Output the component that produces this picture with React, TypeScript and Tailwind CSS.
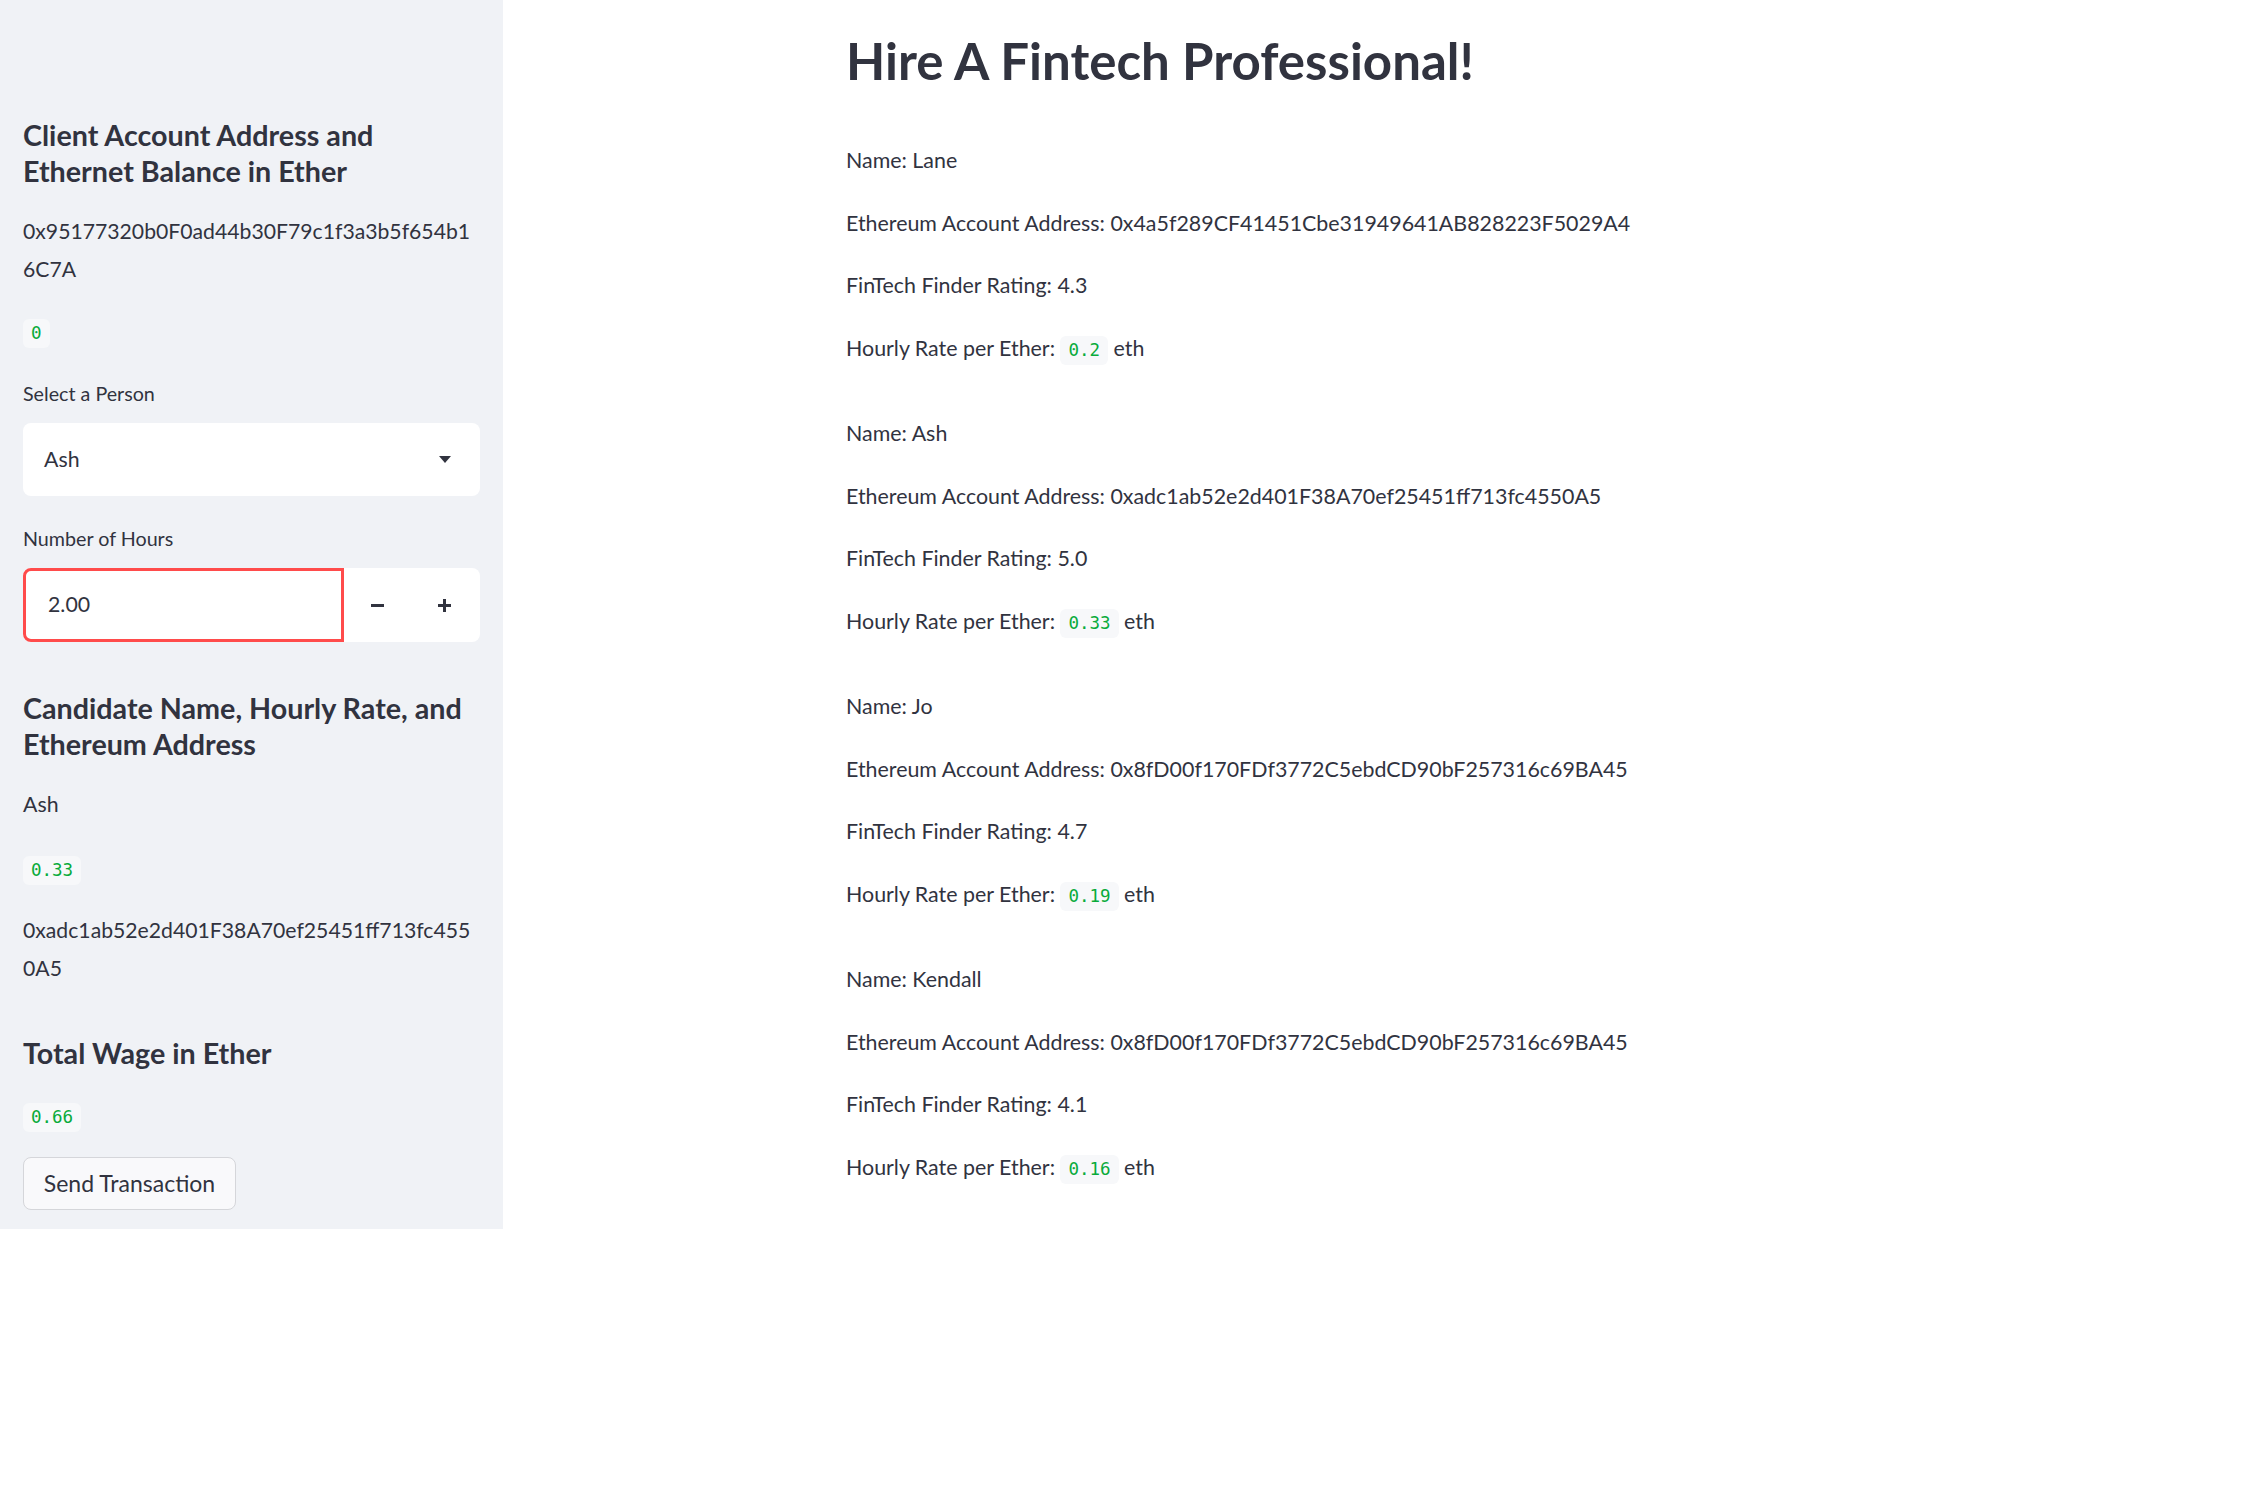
import React from 'react';

const people = [
  { name: 'Lane', address: '0x4a5f289CF41451Cbe31949641AB828223F5029A4', rating: '4.3', rate: '0.2' },
  { name: 'Ash', address: '0xadc1ab52e2d401F38A70ef25451ff713fc4550A5', rating: '5.0', rate: '0.33' },
  { name: 'Jo', address: '0x8fD00f170FDf3772C5ebdCD90bF257316c69BA45', rating: '4.7', rate: '0.19' },
  { name: 'Kendall', address: '0x8fD00f170FDf3772C5ebdCD90bF257316c69BA45', rating: '4.1', rate: '0.16' },
];

const Code: React.FC<{ children: React.ReactNode }> = ({ children }) => (
  <code className="inline-flex items-center h-[29px] px-[8px] rounded-[6px] bg-[#f7f8fa] text-[#09ab3b] font-['DejaVu_Sans_Mono',monospace] text-[17.5px] align-middle">
    {children}
  </code>
);

const App: React.FC = () => {
  return (
    <div className="flex items-start min-h-screen bg-white text-[#31333f] font-['Lato',sans-serif]">
      {/* Sidebar */}
      <aside className="w-[503px] shrink-0 bg-[#f0f2f6] pt-[117px] px-[23px] pb-[19px] flex flex-col gap-[23px]">
        <h3 className="text-[28.7px] font-bold leading-[36px]">Client Account Address and Ethernet Balance in Ether</h3>
        <p className="text-[21.2px] leading-[38px] break-all">0x95177320b0F0ad44b30F79c1f3a3b5f654b16C7A</p>
        <div className="h-[44px] flex items-center">
          <Code>0</Code>
        </div>

        <div className="flex flex-col">
          <label className="text-[19.7px] leading-[32px] mb-[13px]">Select a Person</label>
          <div className="h-[73px] bg-white rounded-[8px] flex items-center justify-between pl-[21px] pr-[29px]">
            <span className="text-[21.3px]">Ash</span>
            <svg width="12" height="7" viewBox="0 0 12 7">
              <path d="M0 0 H12 L6 7 Z" fill="#31333f" />
            </svg>
          </div>
        </div>

        <div className="flex flex-col mt-[4px]">
          <label className="text-[19.7px] leading-[32px] mb-[13px]">Number of Hours</label>
          <div className="h-[74px] flex bg-white rounded-[8px]">
            <div className="w-[321px] border-[3px] border-[#ff4b4b] rounded-l-[8px] flex items-center pl-[22px] text-[21.3px]">2.00</div>
            <div className="flex-1 flex items-center justify-around pr-[2px]">
              <svg width="13" height="13" viewBox="0 0 13 13">
                <rect x="0" y="5" width="13" height="3" fill="#31333f" />
              </svg>
              <svg width="13" height="13" viewBox="0 0 13 13">
                <rect x="0" y="5" width="13" height="3" fill="#31333f" />
                <rect x="5" y="0" width="3" height="13" fill="#31333f" />
              </svg>
            </div>
          </div>
        </div>

        <h3 className="text-[28.7px] font-bold leading-[36px] pt-[25px]">Candidate Name, Hourly Rate, and Ethereum Address</h3>
        <p className="text-[21.3px] leading-[38px]">Ash</p>
        <div className="h-[42px] pt-[6px] flex items-center">
          <Code>0.33</Code>
        </div>
        <p className="text-[21.2px] leading-[38px] break-all">0xadc1ab52e2d401F38A70ef25451ff713fc4550A5</p>

        <h3 className="text-[28.7px] font-bold leading-[36px] pt-[25px]">Total Wage in Ether</h3>
        <div className="h-[40px] pt-[6px] flex items-center">
          <Code>0.66</Code>
        </div>
        <div>
          <button className="h-[53px] w-[213px] rounded-[8px] border border-[#d5d6da] bg-[#f9f9fb] text-[23px]">
            Send Transaction
          </button>
        </div>
      </aside>

      {/* Main */}
      <main className="flex-1 pt-[31px]">
        <div className="w-[1067px] mx-auto">
          <h1 className="text-[51px] font-bold leading-[60px]">Hire A Fintech Professional!</h1>
          <div className="mt-[50px] flex flex-col gap-[47.5px] text-[21.4px]">
            {people.map((p) => (
              <div key={p.name} className="flex flex-col gap-[24.5px]">
                <p className="leading-[38px]">Name: {p.name}</p>
                <p className="leading-[38px]">Ethereum Account Address: {p.address}</p>
                <p className="leading-[38px]">FinTech Finder Rating: {p.rating}</p>
                <p className="leading-[38px]">
                  Hourly Rate per Ether: <Code>{p.rate}</Code> eth
                </p>
              </div>
            ))}
          </div>
        </div>
      </main>
    </div>
  );
};

export default App;
